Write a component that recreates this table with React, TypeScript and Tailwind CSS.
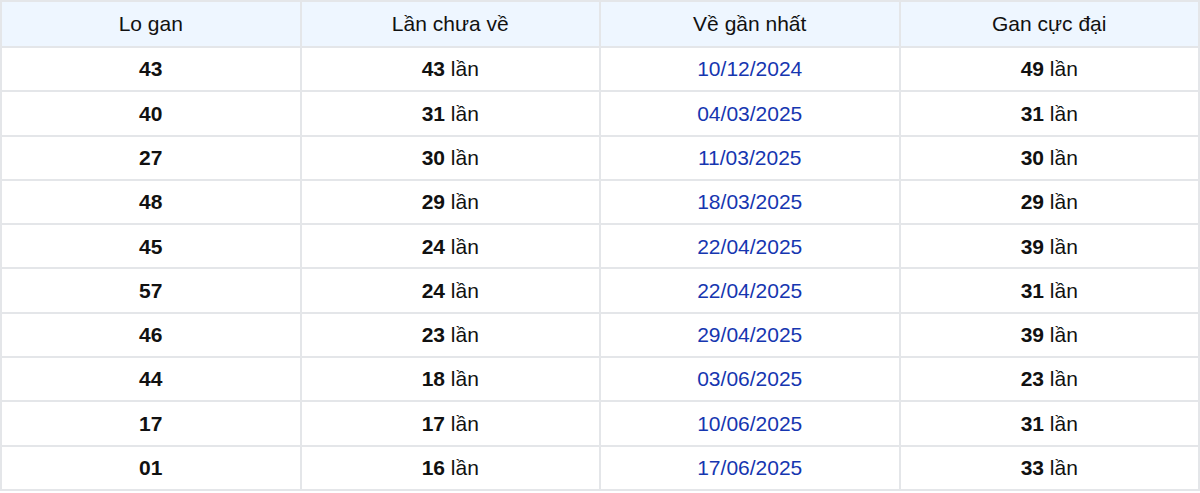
const rows = [
  { lo: '43', chua: '43', date: '10/12/2024', max: '49' },
  { lo: '40', chua: '31', date: '04/03/2025', max: '31' },
  { lo: '27', chua: '30', date: '11/03/2025', max: '30' },
  { lo: '48', chua: '29', date: '18/03/2025', max: '29' },
  { lo: '45', chua: '24', date: '22/04/2025', max: '39' },
  { lo: '57', chua: '24', date: '22/04/2025', max: '31' },
  { lo: '46', chua: '23', date: '29/04/2025', max: '39' },
  { lo: '44', chua: '18', date: '03/06/2025', max: '23' },
  { lo: '17', chua: '17', date: '10/06/2025', max: '31' },
  { lo: '01', chua: '16', date: '17/06/2025', max: '33' },
];

export default function App() {
  return (
    <div className="w-[1200px] bg-white font-['Liberation_Sans',Arial,sans-serif] text-[21px] text-[#111]">
      <table className="w-full table-fixed border-collapse text-center">
        <thead>
          {/* tiêu đề */}
          <tr className="bg-[#eef6ff] h-[46px]">
            <th className="border-2 border-[#e4e6e9] font-normal">Lo gan</th>
            <th className="border-2 border-[#e4e6e9] font-normal">Lần chưa về</th>
            <th className="border-2 border-[#e4e6e9] font-normal">Về gần nhất</th>
            <th className="border-2 border-[#e4e6e9] font-normal">Gan cực đại</th>
          </tr>
        </thead>
        <tbody>
          {rows.map((r, i) => (
            <tr key={i} className="h-[44.3px]">
              <td className="border-2 border-[#e4e6e9] font-bold">{r.lo}</td>
              <td className="border-2 border-[#e4e6e9]">
                <b>{r.chua}</b> lần
              </td>
              <td className="border-2 border-[#e4e6e9] text-[#1636b0]">{r.date}</td>
              <td className="border-2 border-[#e4e6e9]">
                <b>{r.max}</b> lần
              </td>
            </tr>
          ))}
        </tbody>
      </table>
    </div>
  );
}
